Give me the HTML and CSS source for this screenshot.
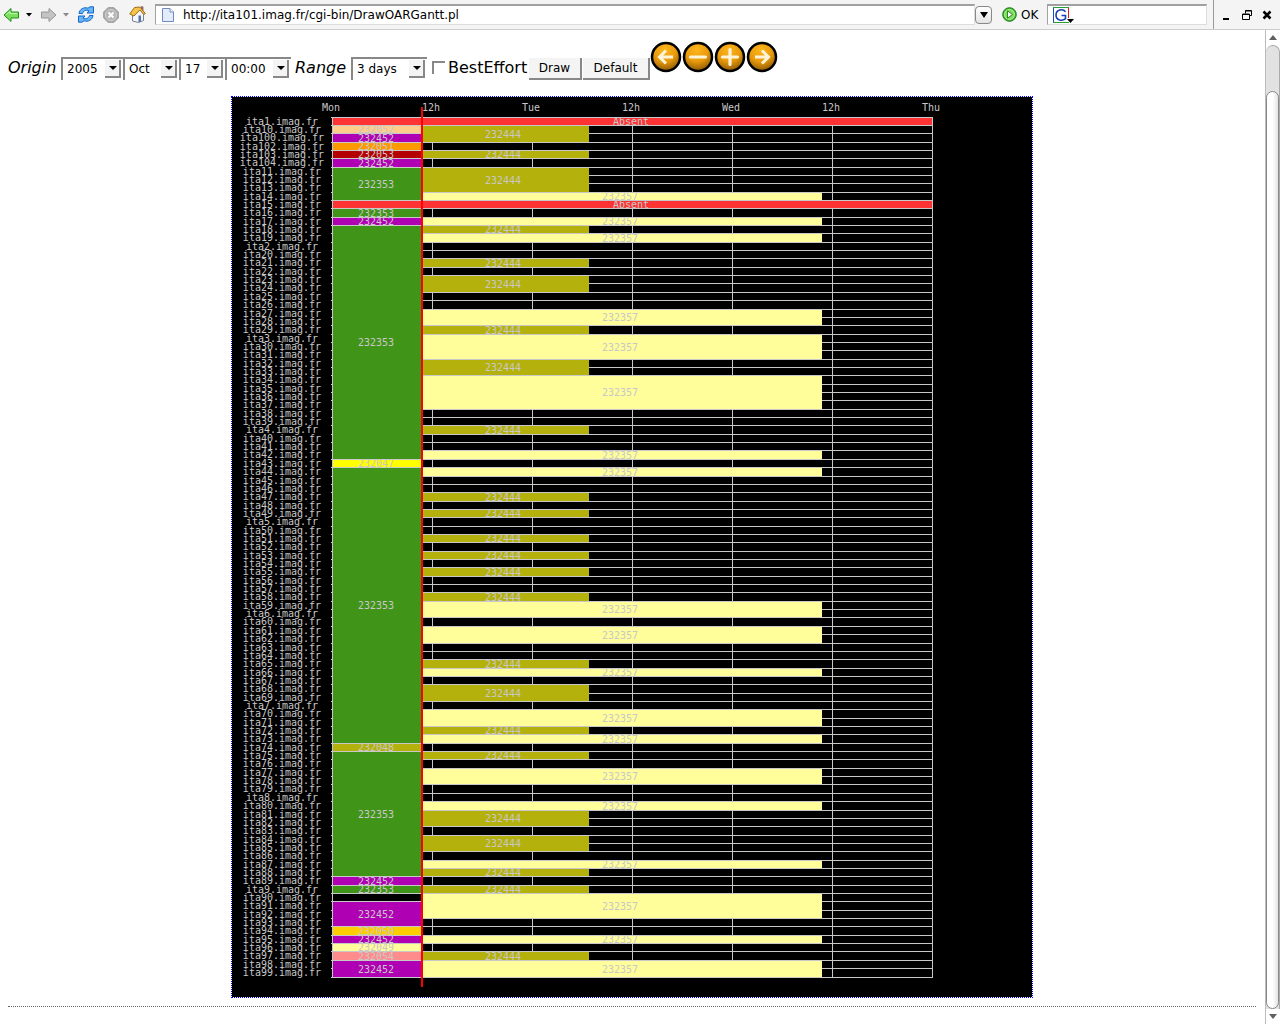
FILE: index.html
```html
<!DOCTYPE html>
<html lang="en">
<head>
<meta charset="utf-8">
<title>OAR Gantt</title>
<link rel="stylesheet" href="styles.css">
</head>
<body>
<header class="toolbar">
  <nav class="nav" aria-label="Browser">
    <button class="tool back" aria-label="Back"><svg width="17" height="16" viewBox="0 0 17 16"><path d="M1 8 8 1.5V5h7.500v6H8v3.500z" fill="#7be05a" stroke="#1f8f1c" stroke-linejoin="round"/><path d="M3.500 7.500 7 4.500V6.500h7" fill="none" stroke="#c9f8b6"/></svg></button>
    <button class="tool caret" aria-label="Back history"><svg width="6" height="4" viewBox="0 0 6 4"><path d="M0 0h6L3 3.500z" fill="#000"/></svg></button>
    <button class="tool forward" aria-label="Forward"><svg width="17" height="16" viewBox="0 0 17 16"><path d="M16 8 9 1.500V5H1.500v6H9v3.500z" fill="#c4c4c4" stroke="#949494" stroke-linejoin="round"/></svg></button>
    <button class="tool caret" aria-label="Forward history"><svg width="6" height="4" viewBox="0 0 6 4"><path d="M0 0h6L3 3.500z" fill="#888"/></svg></button>
    <button class="tool reload" aria-label="Reload"><svg width="18" height="17" viewBox="0 0 18 17"><path d="M2 7.500C2.500 3 7 .8 11 2.200L13 .8h3.500V7H10l2-2.200C9 3.500 6.500 4.500 5.500 7.500z" fill="#67b6f8" stroke="#1566c8" stroke-linejoin="round"/><path d="M16 9.500c-.5 4.500-5 6.700-9 5.300L5 16.200H1.500V10H8l-2 2.200c3 1.300 5.500.3 6.500-2.700z" fill="#67b6f8" stroke="#1566c8" stroke-linejoin="round"/></svg></button>
    <button class="tool stop" aria-label="Stop"><svg width="16" height="16" viewBox="0 0 16 16"><path d="M5 .7h6L15.300 5v6L11 15.300H5L.7 11V5z" fill="#aaa" stroke="#999"/><circle cx="8" cy="8" r="5.500" fill="#b4b4b4" stroke="#d4d4d4"/><path d="M5.500 5.500l5 5M10.500 5.500l-5 5" stroke="#fff" stroke-width="2"/></svg></button>
    <button class="tool home" aria-label="Home"><svg width="17" height="17" viewBox="0 0 17 17"><path d="M3.500 8v7l6 1.500 5-2V8L11 3.500z" fill="#f4f6fb" stroke="#7a8290"/><path d="M.7 8 5.500 1.500 11 1l5.300 6.500-1.500 1-4-4.500L5 10z" fill="#f5c44a" stroke="#9b6c16" stroke-linejoin="round"/><path d="M12 2V.800h2V5" fill="#c33" stroke="#888"/><path d="M9.500 9.500h2.500v6.200l-2.500.5z" fill="#5575a8"/></svg></button>
  </nav>
  <label class="field address">
    <svg width="12" height="14" viewBox="0 0 12 14"><path d="M.5.500h7.500l3.500 3.500v9.500H.5z" fill="#e3ecfd" stroke="#7389bd"/><path d="M8 .5V4h3.500" fill="#fff" stroke="#7389bd"/></svg>
    <input type="text" aria-label="Address" value="http://ita101.imag.fr/cgi-bin/DrawOARGantt.pl">
  </label>
  <button class="history" aria-label="Address history"><svg width="8" height="6" viewBox="0 0 8 6"><path d="M0 0h8L4 6z"/></svg></button>
  <button class="go"><svg width="15" height="15" viewBox="0 0 15 15"><circle cx="7.500" cy="7.500" r="6.800" fill="#3fb52c" stroke="#1d7c17"/><circle cx="7.500" cy="7.500" r="5" fill="#7bdc5c" stroke="#b3f09c"/><path d="M5.500 3.800v7.400l5-3.700z" fill="#fff" stroke="#2a8a20"/></svg><span>OK</span></button>
  <label class="field search">
    <svg width="21" height="17" viewBox="0 0 21 17"><path d="M.5 16V.5" stroke="#1c49c8"/><path d="M0 .5h16M0 15.500h16" stroke="#2c9c36"/><path d="M15.500 1v10" stroke="#e21d1d"/><path d="M12.500 4.800C10 1.300 3 2.500 3 8s6.500 6.500 9.500 3.700V8.500H8.500" fill="none" stroke="#1c3fb4" stroke-width="1.600"/><path d="M14 12h7l-3.500 4z"/></svg>
    <input type="text" aria-label="Search">
  </label>
  <div class="window-controls">
    <button class="tool" aria-label="Minimize"><svg width="10" height="10" viewBox="0 0 10 10"><path d="M1 8h6v2H1z"/></svg></button>
    <button class="tool" aria-label="Restore"><svg width="10" height="10" viewBox="0 0 10 10"><path d="M3.500 3.500V.500h6v5h-2M3 1h7M.5 4h7v5.500H.5zM0 4.500h8" fill="none" stroke="#000"/></svg></button>
    <button class="tool" aria-label="Close"><svg width="10" height="10" viewBox="0 0 10 10"><path d="M1.500 1.500l7 7M8.500 1.500l-7 7" stroke="#000" stroke-width="2.500"/></svg></button>
  </div>
</header>
<div class="viewport">
  <main class="page">
    <form class="controls">
      <em class="origin">Origin</em>
      <span class="picker year"><select aria-label="Year"><option>2005</option></select><i></i></span>
      <span class="picker month"><select aria-label="Month"><option>Oct</option></select><i></i></span>
      <span class="picker day"><select aria-label="Day"><option>17</option></select><i></i></span>
      <span class="picker hour"><select aria-label="Hour"><option>00:00</option></select><i></i></span>
      <em class="range-label">Range</em>
      <span class="picker range"><select aria-label="Range"><option>3 days</option></select><i></i></span>
      <label class="check"><input type="checkbox">BestEffort</label>
      <button class="push draw" type="button">Draw</button>
      <button class="push default" type="button">Default</button>
      <div class="moves">
        <svg class="defs" width="0" height="0"><defs><radialGradient id="amber" cx="45%" cy="25%" r="75%"><stop offset="0" stop-color="#ffb61c"/><stop offset=".55" stop-color="#e89a0c"/><stop offset="1" stop-color="#8f5a04"/></radialGradient></defs></svg>
        <a href="#" aria-label="Earlier"><svg width="32" height="32" viewBox="0 0 32 32"><circle cx="16" cy="16" r="14" fill="url(#amber)" stroke="#000" stroke-width="2.500"/><path d="M23 16H10M16 9.500 9.500 16l6.500 6.500" fill="none" stroke="#fff4d8" stroke-width="3"/></svg></a>
        <a href="#" aria-label="Zoom out"><svg width="32" height="32" viewBox="0 0 32 32"><circle cx="16" cy="16" r="14" fill="url(#amber)" stroke="#000" stroke-width="2.500"/><path d="M8.500 16h15" stroke="#fff4d8" stroke-width="3.200" stroke-linecap="round"/></svg></a>
        <a href="#" aria-label="Zoom in"><svg width="32" height="32" viewBox="0 0 32 32"><circle cx="16" cy="16" r="14" fill="url(#amber)" stroke="#000" stroke-width="2.500"/><path d="M8.500 16h15M16 8.500v15" stroke="#fff4d8" stroke-width="3.200" stroke-linecap="round"/></svg></a>
        <a href="#" aria-label="Later"><svg width="32" height="32" viewBox="0 0 32 32"><circle cx="16" cy="16" r="14" fill="url(#amber)" stroke="#000" stroke-width="2.500"/><path d="M9 16h13M16 9.500l6.500 6.500-6.500 6.500" fill="none" stroke="#fff4d8" stroke-width="3"/></svg></a>
      </div>
    </form>
    <a class="chart" href="#"><svg id="gantt" width="800" height="900" viewBox="0 0 800 900" role="img" aria-label="Job schedule by host"></svg></a>
    <hr class="rule">
  </main>
  <aside class="scrollbar" aria-hidden="true">
    <div class="step"><svg width="8" height="5" viewBox="0 0 8 5"><path d="M4 0l4 5H0z" fill="#606060"/></svg></div>
    <div class="track"><div class="thumb"></div></div>
    <div class="step"><svg width="8" height="5" viewBox="0 0 8 5"><path d="M0 0h8L4 5z" fill="#606060"/></svg></div>
  </aside>
</div>
<script src="gantt.js"></script>
</body>
</html>
```
FILE: styles.css
```css
* { box-sizing: border-box; }
html, body { margin: 0; height: 100%; }
body {
  display: flex;
  flex-direction: column;
  overflow: hidden;
  background: #fff;
  color: #000;
  font: 16px/22px "DejaVu Sans", sans-serif;
}
button, input, select { font: 12px/16px "DejaVu Sans", sans-serif; color: #000; margin: 0; }
svg { display: block; }

.toolbar {
  display: flex;
  align-items: center;
  flex: none;
  height: 30px;
  background: #f4f4f4;
  border-bottom: 1px solid #ccc;
}
.nav { display: flex; align-items: center; padding-left: 3px; width: 155px; }
.tool { display: block; padding: 0; border: 0; background: none; }
.caret { margin: 0 8px 0 6px; }
.nav .reload { margin-right: 8px; }
.nav .stop { margin-right: 10px; }
.field {
  display: flex;
  align-items: center;
  height: 21px;
  background: #fff;
  border: 1px solid #ddd;
  border-top: 2px solid #a0a0a0;
  border-left-color: #a0a0a0;
}
.field input { flex: 1; min-width: 0; border: 0; padding: 0; background: none; outline: 0; }
.address { flex: 1; padding-left: 6px; gap: 9px; }
.history {
  display: grid;
  place-items: center;
  width: 17px;
  height: 18px;
  padding: 0;
  border: 1px solid #888;
  border-radius: 4px;
  background: linear-gradient(#fff, #e4e4e4);
}
.go { display: flex; align-items: center; gap: 4px; width: 55px; padding: 0 0 0 10px; border: 0; background: none; }
.search { width: 160px; padding-left: 5px; }
.window-controls {
  display: flex;
  align-items: center;
  align-self: stretch;
  gap: 10px;
  width: 67px;
  margin-left: 6px;
  padding-left: 8px;
  border-left: 1px solid #999;
}

.viewport { display: flex; flex: 1; min-height: 0; }
.page { flex: 1; min-width: 0; padding: 11px 9px 0 8px; overflow: hidden; }

.controls { display: flex; align-items: flex-end; height: 39px; }
.origin, .range-label { height: 23px; }
.origin { width: 53px; }
.range-label { width: 60px; padding-left: 4px; }
.picker { display: grid; height: 23px; }
.picker select, .picker i { grid-area: 1 / 1; }
.picker select {
  appearance: none;
  padding: 0 0 2px 4px;
  background: #fff;
  border: 0 solid #888;
  border-width: 2px 0 0 2px;
  border-radius: 0;
}
.picker i {
  justify-self: end;
  width: 16px;
  height: 18px;
  margin: 3px 2px 0 0;
  background: #f4f4f4;
  border: 0 solid #888;
  border-width: 0 2px 2px 0;
  pointer-events: none;
}
.picker i::before {
  content: "";
  display: block;
  width: 0;
  margin: 6px 0 0 4px;
  border: 4px solid transparent;
  border-top-color: #000;
  border-bottom: 0;
}
.year { width: 62px; }
.month { width: 56px; }
.day { width: 46px; }
.hour { width: 66px; }
.range { width: 76px; }
.check { display: flex; gap: 3px; height: 23px; padding-left: 5px; width: 102px; }
.check input {
  appearance: none;
  width: 13px;
  height: 13px;
  margin-top: 4px;
  border: 0 solid #888;
  border-width: 2px 0 0 2px;
  background: #fff;
}
.push {
  height: 22px;
  padding: 0;
  background: #f4f4f4;
  border: 0 solid #888;
  border-width: 0 2px 2px 0;
}
.draw { width: 53px; }
.default { width: 67px; margin-left: 1px; }
.moves { display: flex; padding-bottom: 7px; }
.defs { position: absolute; }

.chart { display: block; width: fit-content; margin: 16px auto 0; border: 1px dotted #00f; }
.chart svg { background: #000; }
.chart text { font: 10px "DejaVu Sans Mono", monospace; fill: #c8c8c8; text-anchor: middle; }
.rule { margin: 8px 0 0; border: 0; border-top: 1px dotted #666; }

.scrollbar { display: flex; flex-direction: column; width: 15px; background: #fff; border-left: 1px solid #bbb; }
.step { display: grid; place-items: center; height: 15px; }
.track {
  flex: 1;
  padding-top: 45px;
  background: #e2e2e2;
  border: 1px solid #aaa;
  border-width: 1px 1px 0 0;
  border-radius: 7px 7px 0 0;
}
.thumb {
  height: 100%;
  border: 1px solid #888;
  border-radius: 7px;
  background: linear-gradient(90deg, #fff, #fff 50%, #e4e4e4);
}
```
FILE: gantt.js
```js
const LEFT = 100, TOP = 20, WIDTH = 600, HEIGHT = 860, NOW = 190;
const GREY = "#c8c8c8";

// Hosts in alphabetical order, as the scheduler lists them
const ids = [];
for (let n = 1; n <= 100; n++) ids.push(n);
const hosts = ids.filter(n => n < 100).concat([100, 102, 103, 104])
  .map(String).sort().map(n => "ita" + n + ".imag.fr");
const rowY = i => TOP + Math.floor(i * HEIGHT / hosts.length);

const colours = {
  232353: "#409418", 232444: "#b4b00c", 232357: "#fffe9b", 232452: "#b000b4",
  232052: "#ffcc8c", 232051: "#ff9900", 232053: "#b40000", 232047: "#ffff00",
  232048: "#b4b00c", 232050: "#ffcc00", 232049: "#fffe9b", 232054: "#ff8c8c",
  Absent: "#ff3333"
};

// [job, first row, last row]
const past = [
  [232052, 1, 1], [232452, 2, 2], [232051, 3, 3], [232053, 4, 4], [232452, 5, 5],
  [232353, 6, 9], [232353, 11, 11], [232452, 12, 12], [232353, 13, 40],
  [232047, 41, 41], [232353, 42, 74], [232048, 75, 75], [232353, 76, 90],
  [232452, 91, 91], [232353, 92, 92], [232452, 94, 96], [232050, 97, 97],
  [232452, 98, 98], [232049, 99, 99], [232054, 100, 100], [232452, 101, 102]
];
const short = [[1, 2], [4, 4], [6, 8], [13, 13], [17, 17], [19, 20], [25, 25], [29, 30],
  [37, 37], [45, 45], [47, 47], [50, 50], [52, 52], [54, 54], [57, 57], [65, 65],
  [68, 69], [73, 73], [76, 76], [83, 84], [86, 87], [90, 90], [92, 92], [100, 100]];
const long = [[9, 9], [12, 12], [14, 14], [23, 24], [26, 28], [31, 34], [40, 40], [42, 42],
  [58, 59], [61, 62], [66, 66], [71, 72], [74, 74], [78, 79], [82, 82], [89, 89],
  [93, 95], [98, 98], [101, 102]];

const out = [];
const rect = (x, y, w, h, fill) =>
  out.push(`<rect x="${x}" y="${y}" width="${w}" height="${h}" fill="${fill}"/>`);
const text = (x, y, s) => out.push(`<text x="${x}" y="${y}">${s}</text>`);

["Mon", "12h", "Tue", "12h", "Wed", "12h", "Thu"].forEach((s, i) => {
  text(LEFT + i * 100 - 1, 14, s);
  rect(LEFT + i * 100, TOP, 1, HEIGHT + 1, GREY);
});
for (let i = 0; i <= hosts.length; i++) rect(LEFT - 1, rowY(i), WIDTH + 2, 1, GREY);
hosts.forEach((h, i) => text(50, rowY(i) + 8, h));

const jobs = [
  ...past.map(([job, a, b]) => ({ job, a, b, x: 101, end: NOW, mid: 144 })),
  ...short.map(([a, b]) => ({ job: 232444, a, b, x: NOW, end: 357, mid: 271 })),
  ...long.map(([a, b]) => ({ job: 232357, a, b, x: NOW, end: 590, mid: 388 })),
  ...[0, 10].map(a => ({ job: "Absent", a, b: a, x: 101, end: 700, mid: 399 }))
].sort((p, q) => p.a - q.a);
jobs.forEach(j => {
  const y = rowY(j.a), y2 = rowY(j.b + 1);
  rect(j.x, y + 1, j.end - j.x, y2 - y - 1, colours[j.job]);
  text(j.mid, Math.round((y + y2) / 2) + 4, j.job);
  rect(j.x, y, j.end - j.x, 1, GREY);
  rect(j.x, y2, j.end - j.x, 1, GREY);
});

rect(NOW - 1, 10, 2, 880, "#f00");
document.getElementById("gantt").innerHTML = out.join("");
```
